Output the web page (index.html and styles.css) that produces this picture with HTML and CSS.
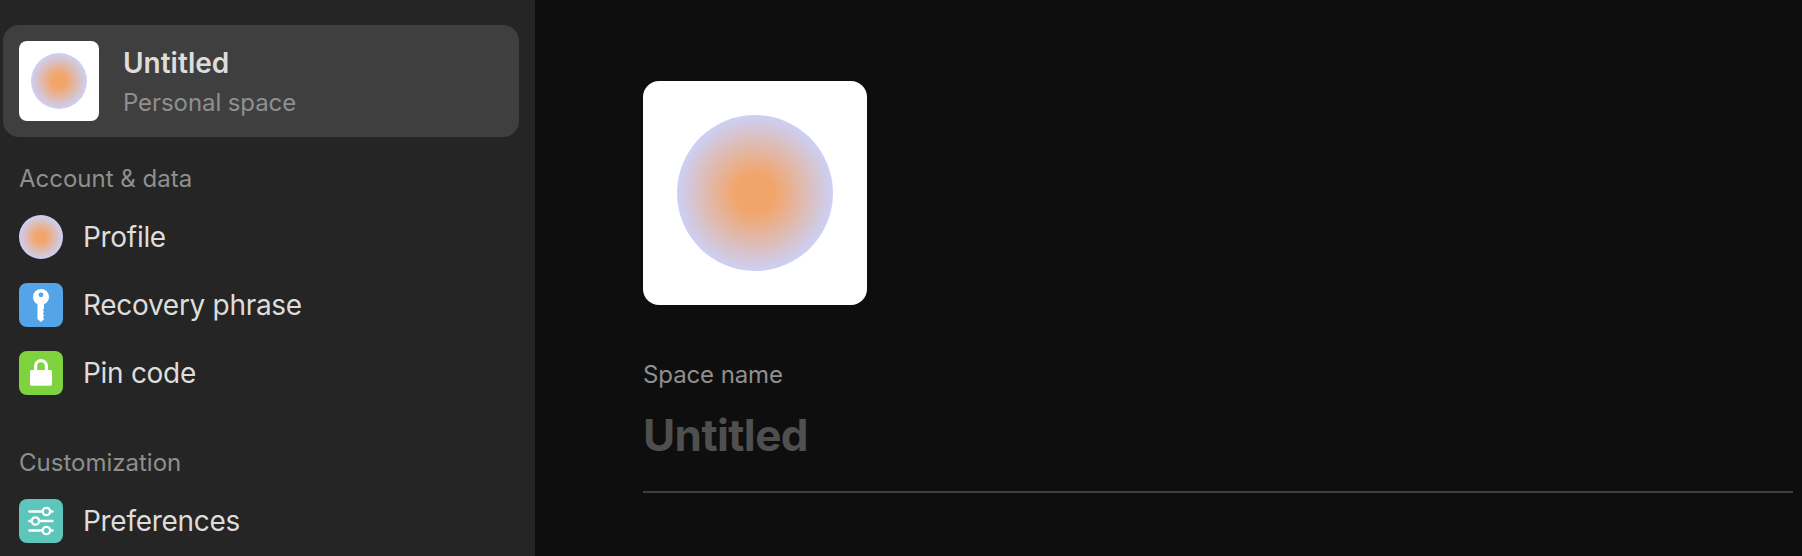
FILE: index.html
```html
<!DOCTYPE html>
<html lang="en">
<head>
<meta charset="utf-8">
<title>Settings</title>
<link rel="stylesheet" href="styles.css">
</head>
<body>
<div class="app">
  <nav class="sidebar">
    <div class="space-card">
      <div class="avatar avatar-small"><span class="orb"></span></div>
      <div class="space-info">
        <div class="space-title">Untitled</div>
        <div class="space-type">Personal space</div>
      </div>
    </div>
    <section class="group">
      <h2 class="group-title">Account &amp; data</h2>
      <div class="item"><span class="icon orb"></span><span class="item-label">Profile</span></div>
      <div class="item">
        <svg class="icon" viewBox="0 0 44 44"><rect width="44" height="44" rx="8" fill="#54a4e8"/><path fill="#fff" fill-rule="evenodd" d="M22 6a8 8 0 0 1 8 8c0 3.200-1.700 5.600-5 7.300V25.800l-1.200 1.300 1.400 1.700-1.400 1.800 1.400 1.800-1.200 1.500 1.200 2.100-3.200 3-3.500-3V21.300C15.600 19.600 14 17.200 14 14a8 8 0 0 1 8-8zm0 3.400a2.400 2.400 0 1 0 0 4.800 2.400 2.400 0 0 0 0-4.800z"/></svg>
        <span class="item-label">Recovery phrase</span>
      </div>
      <div class="item">
        <svg class="icon" viewBox="0 0 44 44"><rect width="44" height="44" rx="8" fill="#7fd33f"/><rect x="11" y="19" width="22" height="15.700" rx="1.500" fill="#fff"/><path d="M16.600 20v-5a5.400 5.400 0 0 1 10.800 0V20" fill="none" stroke="#fff" stroke-width="3.200"/></svg>
        <span class="item-label">Pin code</span>
      </div>
    </section>
    <section class="group">
      <h2 class="group-title">Customization</h2>
      <div class="item">
        <svg class="icon" viewBox="0 0 44 44"><rect width="44" height="44" rx="8" fill="#5dc6bb"/><g fill="none" stroke="#fff" stroke-width="2.300" stroke-linecap="round"><path d="M10.300 12.500h13.200M31.500 12.500h2M10.300 22h2.200M20.500 22h13M10.300 31.500h13.200M31.500 31.500h2"/><circle cx="27.400" cy="12.500" r="3.700"/><circle cx="16.400" cy="22" r="3.700"/><circle cx="27.400" cy="31.500" r="3.700"/></g></svg>
        <span class="item-label">Preferences</span>
      </div>
    </section>
  </nav>
  <main class="content">
    <div class="avatar avatar-large"><span class="orb"></span></div>
    <div class="field">
      <div class="field-label">Space name</div>
      <div class="field-value">Untitled</div>
    </div>
  </main>
</div>
</body>
</html>
```
FILE: styles.css
```css
* { box-sizing: border-box; }
body {
  margin: 0;
  background: #0e0e0e;
  font-family: Inter, "Liberation Sans", sans-serif;
  color: #dddddb;
}
.app { display: flex; height: 556px; overflow: hidden; }
.sidebar { width: 535px; flex: none; padding: 25px 16px 0 3px; background: #252525; }
.space-card {
  display: flex;
  align-items: center;
  gap: 24px;
  height: 112px;
  padding: 0 16px;
  border-radius: 16px;
  background: #3f3f3f;
}
.avatar { display: flex; align-items: center; justify-content: center; flex: none; background: #fff; }
.avatar-small { width: 80px; height: 80px; border-radius: 8px; }
.avatar-small .orb { width: 56px; height: 56px; }
.avatar-large { width: 224px; height: 224px; border-radius: 16px; }
.avatar-large .orb { width: 156px; height: 156px; }
.orb {
  border-radius: 50%;
  background: radial-gradient(circle closest-side, #f2a56b 25%, #ccd0f5 100%);
}
.space-title { font-size: 28px; line-height: 44px; font-weight: 600; }
.space-type { font-size: 24px; line-height: 36px; letter-spacing: -0.08px; color: #8f8f8f; }
.group { padding: 0 16px; }
.group + .group { margin-top: 14px; }
.group-title {
  margin: 0;
  padding-top: 24px;
  height: 66px;
  font-size: 24px;
  line-height: 36px;
  font-weight: 400;
  color: #8f8f8f;
}
.item { display: flex; align-items: center; gap: 20px; height: 68px; }
.icon { display: block; width: 44px; height: 44px; flex: none; }
.item-label { font-size: 28px; line-height: 44px; letter-spacing: -0.3px; }
.content { flex: 1; padding: 81px 9px 0 108px; }
.field { margin-top: 52px; height: 136px; border-bottom: 2px solid #404040; }
.field-label { font-size: 24px; line-height: 36px; letter-spacing: -0.1px; color: #8f8f8f; }
.field-value { padding-top: 14px; font-size: 44px; line-height: 56px; font-weight: 700; letter-spacing: -0.6px; color: #4f4f4f; }
```
